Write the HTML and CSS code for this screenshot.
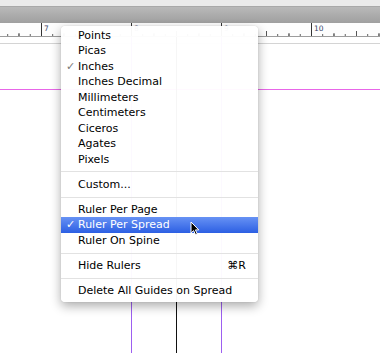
FILE: index.html
```html
<!DOCTYPE html>
<html>
<head>
<meta charset="utf-8">
<link rel="stylesheet" href="styles.css">
</head>
<body>
<div class="window">
  <div class="topband"></div>
  <div class="titlebar"></div>
  <div class="ruler">
    <div class="inch"><span class="num">7</span></div>
    <div class="inch"><span class="num">8</span></div>
    <div class="inch"><span class="num">9</span></div>
    <div class="inch last"><span class="num">10</span></div>
  </div>
  <div class="canvas">
    <div class="pastetop"></div>
    <div class="guide-h"></div>
    <div class="guide-v purple g1"></div>
    <div class="guide-v black g2"></div>
    <div class="guide-v purple g3"></div>
  </div>

  <div class="menu">
    <div class="item">Points</div>
    <div class="item">Picas</div>
    <div class="item"><span class="check gray">✓</span>Inches</div>
    <div class="item">Inches Decimal</div>
    <div class="item">Millimeters</div>
    <div class="item">Centimeters</div>
    <div class="item">Ciceros</div>
    <div class="item">Agates</div>
    <div class="item">Pixels</div>
    <div class="sep"></div>
    <div class="item">Custom...</div>
    <div class="sep"></div>
    <div class="item">Ruler Per Page</div>
    <div class="item selected"><span class="check">✓</span>Ruler Per Spread</div>
    <div class="item">Ruler On Spine</div>
    <div class="sep"></div>
    <div class="item"><span>Hide Rulers</span><span class="key">⌘R</span></div>
    <div class="sep"></div>
    <div class="item">Delete All Guides on Spread</div>
  </div>

  <svg class="cursor" width="11" height="15" viewBox="0 0 11 15">
    <path d="M1 1 L1 12 L3.6 9.6 L5.6 13.8 L7.3 13 L5.4 8.9 L8.8 8.9 Z" fill="#000" stroke="#fff" stroke-width="1" stroke-linejoin="round"/>
  </svg>
</div>
</body>
</html>
```

FILE: styles.css
```css
html, body {
  margin: 0;
  padding: 0;
}
body {
  width: 380px;
  height: 353px;
  overflow: hidden;
  background: #fff;
  font-family: "DejaVu Sans", "Liberation Sans", sans-serif;
}
.window {
  position: relative;
  width: 380px;
  height: 353px;
  overflow: hidden;
  display: flex;
  flex-direction: column;
}
.topband {
  height: 6px;
  background: #ebebeb;
}
.titlebar {
  height: 16px;
  border-top: 1px solid #a9a9a9;
  background: linear-gradient(#b9b9b9, #9f9f9f);
}
.ruler {
  height: 13px;
  border-bottom: 1px solid #9c9c9c;
  background-color: #fdfdfd;
  background-image:
    linear-gradient(to right, #555 0 1px, transparent 1px),
    linear-gradient(to right, #555 0 1px, transparent 1px),
    linear-gradient(to right, #555 0 1px, transparent 1px);
  background-size: 45px 5px, 22.5px 3px, 11.25px 2px;
  background-repeat: repeat-x;
  background-position: 86px bottom, 41px bottom, 41px bottom;
  display: flex;
  padding-left: 41px;
  overflow: hidden;
}
.inch {
  flex: 0 0 90px;
  border-left: 1px solid #333;
  box-sizing: border-box;
  height: 13px;
}
.inch.last {
  flex: 0 0 28px;
}
.num {
  display: block;
  font-family: "DejaVu Sans", sans-serif;
  font-size: 7.5px;
  line-height: 8px;
  color: #3a4468;
  margin: 2px 0 0 2px;
}
.canvas {
  flex: 1;
  position: relative;
  background: #fff;
}
.pastetop {
  height: 6px;
  border-bottom: 1px solid #d4d4d4;
}
.guide-h {
  position: absolute;
  left: 0;
  right: 0;
  top: 52px;
  height: 1px;
  background: #e866e8;
}
.guide-v {
  position: absolute;
  top: 0;
  bottom: 0;
  width: 1px;
}
.purple { background: #9d5ff0; }
.black { background: #111; }
.g1 { left: 131px; }
.g2 { left: 176px; }
.g3 { left: 221px; }

.menu {
  position: absolute;
  left: 61px;
  top: 26px;
  width: 197px;
  padding: 2px 0 3px;
  box-sizing: border-box;
  background: rgba(255, 255, 255, 0.965);
  border-radius: 4px;
  box-shadow: 0 4px 11px rgba(0, 0, 0, 0.33), 0 0 1px rgba(0, 0, 0, 0.25);
  font-size: 11px;
  color: #000;
}
.item {
  height: 15.45px;
  line-height: 15.45px;
  padding: 0 12px 0 17px;
  display: flex;
  justify-content: space-between;
  position: relative;
  white-space: nowrap;
}
.item.selected {
  background: linear-gradient(#6792f4, #2c5fe3);
  color: #fff;
}
.check {
  position: absolute;
  left: 5px;
  top: 0;
  font-size: 11px;
}
.check.gray { color: #7a7a7a; }
.key {
  font-size: 11px;
}
.sep {
  height: 9.75px;
  display: flex;
  align-items: center;
}
.sep::before {
  content: "";
  display: block;
  width: 100%;
  height: 1px;
  background: #e2e2e2;
}
.cursor {
  position: absolute;
  left: 190px;
  top: 221px;
}
```
